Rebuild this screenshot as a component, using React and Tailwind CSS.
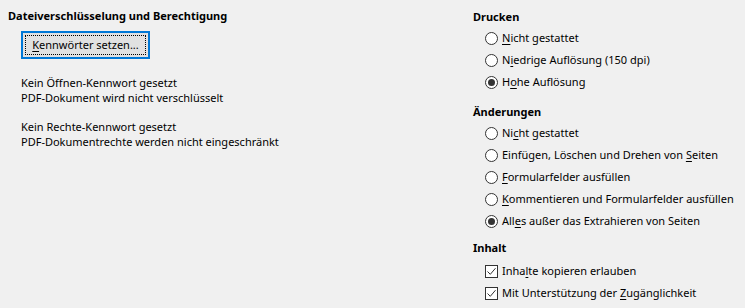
const font = { fontFamily: '"Noto Sans", "Open Sans", sans-serif' };

function Radio({ checked }) {
  return (
    <span className="w-[13px] h-[13px] rounded-full border border-[#333] bg-white flex items-center justify-center shrink-0">
      {checked && <span className="w-[7px] h-[7px] rounded-full bg-[#333]"></span>}
    </span>
  );
}

function Check() {
  return (
    <span className="w-[13px] h-[13px] border border-[#333] bg-white flex items-center justify-center shrink-0">
      <svg width="11" height="11" viewBox="0 0 11 11">
        <path d="M1.5 5.5 L4.3 8.3 L9.5 2.2" fill="none" stroke="#333" strokeWidth="1" />
      </svg>
    </span>
  );
}

// label with one underlined access key
function Label({ pre, k, post }) {
  return (
    <span className="whitespace-nowrap">
      {pre}
      <span className="underline underline-offset-2">{k}</span>
      {post}
    </span>
  );
}

function Option({ type = "radio", checked, pre, k, post }) {
  return (
    <div className="h-[22px] flex items-center gap-[4px] pl-[12px]">
      {type === "radio" ? <Radio checked={checked} /> : <Check />}
      <Label pre={pre} k={k} post={post} />
    </div>
  );
}

export default function App() {
  return (
    <div className="w-[745px] h-[308px] bg-[#f0f0f0] text-black text-[11px] leading-[16px] flex overflow-hidden" style={font}>
      <div className="w-[473px] pl-[8px] pt-[8px]">
        <h3 className="font-bold">Dateiverschlüsselung und Berechtigung</h3>
        <div className="pl-[13px] mt-[7px]">
          <button className="w-[129px] h-[28px] bg-[#e1e1e1] border-2 border-[#0078d7] p-[2px] flex">
            <span className="flex-1 border border-dotted border-black flex items-center justify-center">
              <Label pre="" k="K" post="ennwörter setzen..." />
            </span>
          </button>
          <div className="mt-[16px] leading-[15px]">
            <p>Kein Öffnen-Kennwort gesetzt</p>
            <p>PDF-Dokument wird nicht verschlüsselt</p>
          </div>
          <div className="mt-[14px] leading-[15px]">
            <p>Kein Rechte-Kennwort gesetzt</p>
            <p>PDF-Dokumentrechte werden nicht eingeschränkt</p>
          </div>
        </div>
      </div>
      <div className="flex-1 pt-[9px]">
        <h3 className="font-bold">Drucken</h3>
        <div className="mt-[2px]">
          <Option pre="" k="N" post="icht gestattet" />
          <Option pre="N" k="i" post="edrige Auflösung (150 dpi)" />
          <Option checked pre="H" k="o" post="he Auflösung" />
        </div>
        <h3 className="font-bold mt-[11px]">Änderungen</h3>
        <div className="mt-[2px]">
          <Option pre="Ni" k="c" post="ht gestattet" />
          <Option pre="Einfügen, Löschen und Drehen von " k="S" post="eiten" />
          <Option pre="" k="F" post="ormularfelder ausfüllen" />
          <Option pre="" k="K" post="ommentieren und Formularfelder ausfüllen" />
          <Option checked pre="All" k="e" post="s außer das Extrahieren von Seiten" />
        </div>
        <h3 className="font-bold mt-[8px]">Inhalt</h3>
        <div className="mt-[4px]">
          <Option type="check" pre="Inha" k="l" post="te kopieren erlauben" />
          <Option type="check" pre="Mit Unterstützung der " k="Z" post="ugänglichkeit" />
        </div>
      </div>
    </div>
  );
}
